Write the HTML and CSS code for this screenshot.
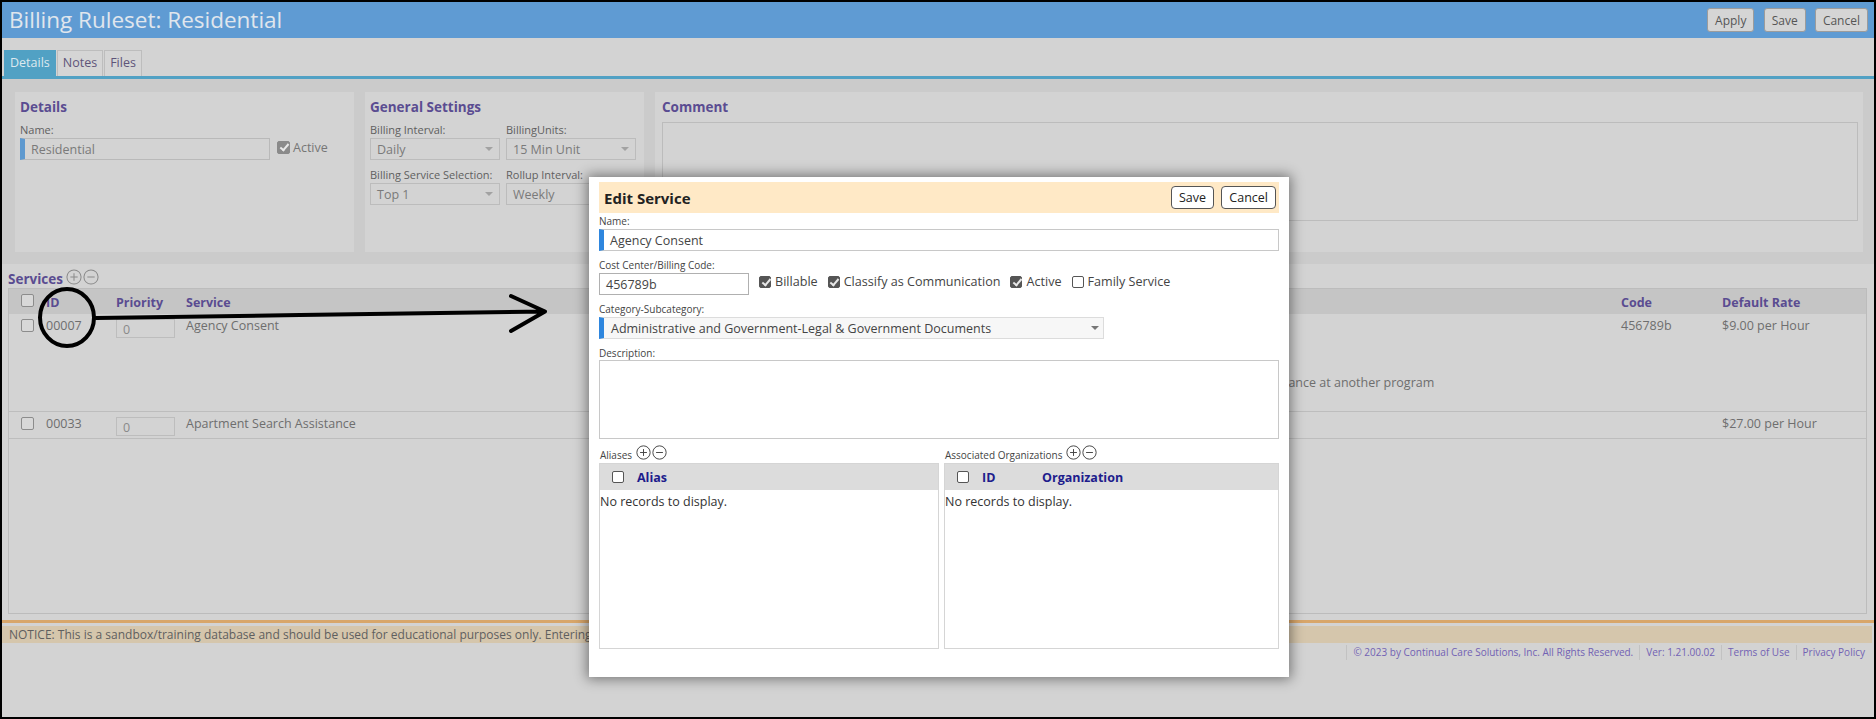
FILE: index.html
```html
<!DOCTYPE html>
<html lang="en">
<head>
    <meta charset="UTF-8">
    <meta name="viewport" content="width=device-width, initial-scale=1.0">
    <title>Billing Ruleset: Residential</title>
    <link rel="stylesheet" href="styles.css">
</head>
<body>
<div class="screen">
    <header class="topbar">
        <h1>Billing Ruleset: Residential</h1>
        <div class="actions">
            <button class="btn">Apply</button>
            <button class="btn">Save</button>
            <button class="btn">Cancel</button>
        </div>
    </header>

    <nav class="tabs">
        <a class="tab active">Details</a>
        <a class="tab">Notes</a>
        <a class="tab">Files</a>
    </nav>

    <div class="settings">
        <section class="panel panel-details">
            <h2>Details</h2>
            <label class="label">Name:</label>
            <div class="details-row">
                <div class="input required name-input">Residential</div>
                <label class="check"><span class="box checked"></span>Active</label>
            </div>
        </section>

        <section class="panel panel-general">
            <h2>General Settings</h2>
            <div class="fields">
                <div class="field">
                    <label class="label">Billing Interval:</label>
                    <div class="select">Daily</div>
                </div>
                <div class="field">
                    <label class="label">BillingUnits:</label>
                    <div class="select">15 Min Unit</div>
                </div>
                <div class="field">
                    <label class="label">Billing Service Selection:</label>
                    <div class="select">Top 1</div>
                </div>
                <div class="field">
                    <label class="label">Rollup Interval:</label>
                    <div class="select">Weekly</div>
                </div>
            </div>
        </section>

        <section class="panel panel-comment">
            <h2>Comment</h2>
            <div class="textarea"></div>
        </section>
    </div>

    <section class="services">
        <h2 class="services-title">Services
            <span class="icons">
                <svg class="ico" viewBox="0 0 14 14"><circle cx="7" cy="7" r="6.2"/><path d="M7 3.8v6.4M3.8 7h6.4"/></svg>
                <svg class="ico" viewBox="0 0 14 14"><circle cx="7" cy="7" r="6.2"/><path d="M3.8 7h6.4"/></svg>
            </span>
        </h2>
        <div class="grid-wrap">
            <table class="grid">
                <colgroup>
                    <col style="width:31px"><col style="width:70px"><col style="width:70px"><col style="width:1066px"><col><col style="width:101px"><col style="width:150px">
                </colgroup>
                <thead>
                    <tr>
                        <th><span class="box"></span></th>
                        <th>ID</th>
                        <th>Priority</th>
                        <th>Service</th>
                        <th></th>
                        <th>Code</th>
                        <th>Default Rate</th>
                    </tr>
                </thead>
                <tbody>
                    <tr class="tall">
                        <td><span class="box"></span></td>
                        <td>00007</td>
                        <td><div class="priority">0</div></td>
                        <td>Agency Consent</td>
                        <td class="desc">assistance at another program</td>
                        <td>456789b</td>
                        <td>$9.00 per Hour</td>
                    </tr>
                    <tr>
                        <td><span class="box"></span></td>
                        <td>00033</td>
                        <td><div class="priority">0</div></td>
                        <td>Apartment Search Assistance</td>
                        <td></td>
                        <td></td>
                        <td>$27.00 per Hour</td>
                    </tr>
                </tbody>
            </table>
        </div>
    </section>

    <div class="notice-line"></div>
    <div class="notice">NOTICE: This is a sandbox/training database and should be used for educational purposes only. Entering real client information is not permitted.</div>
    <footer class="footer">
        <a>© 2023 by Continual Care Solutions, Inc. All Rights Reserved.</a>
        <a>Ver: 1.21.00.02</a>
        <a>Terms of Use</a>
        <a>Privacy Policy</a>
    </footer>

    <svg class="annotation" width="1876" height="719" viewBox="0 0 1876 719">
        <ellipse cx="67" cy="317.5" rx="27" ry="28.5"/>
        <path d="M96 318 L300 315 L545 311.5 M511 296 L545 311.5 L511 331"/>
    </svg>

    <div class="modal">
        <div class="modal-head">
            <h3>Edit Service</h3>
            <div>
                <button class="mbtn">Save</button>
                <button class="mbtn">Cancel</button>
            </div>
        </div>

        <label class="mlabel">Name:</label>
        <div class="minput required">Agency Consent</div>

        <label class="mlabel">Cost Center/Billing Code:</label>
        <div class="code-row">
            <div class="minput code-input">456789b</div>
            <label class="mcheck"><span class="mbox checked"></span>Billable</label>
            <label class="mcheck"><span class="mbox checked"></span>Classify as Communication</label>
            <label class="mcheck"><span class="mbox checked"></span>Active</label>
            <label class="mcheck"><span class="mbox"></span>Family Service</label>
        </div>

        <label class="mlabel">Category-Subcategory:</label>
        <div class="mselect">Administrative and Government-Legal &amp; Government Documents</div>

        <label class="mlabel">Description:</label>
        <div class="mtextarea"></div>

        <div class="subgrids">
            <div class="subgrid">
                <div class="sub-title">Aliases
                    <svg class="mico" viewBox="0 0 14 14"><circle cx="7" cy="7" r="6.2"/><path d="M7 3.8v6.4M3.8 7h6.4"/></svg>
                    <svg class="mico" viewBox="0 0 14 14"><circle cx="7" cy="7" r="6.2"/><path d="M3.8 7h6.4"/></svg>
                </div>
                <div class="sub-box">
                    <div class="sub-head">
                        <span class="mbox"></span>
                        <span class="col-alias">Alias</span>
                    </div>
                    <div class="empty">No records to display.</div>
                </div>
            </div>
            <div class="subgrid">
                <div class="sub-title">Associated Organizations
                    <svg class="mico" viewBox="0 0 14 14"><circle cx="7" cy="7" r="6.2"/><path d="M7 3.8v6.4M3.8 7h6.4"/></svg>
                    <svg class="mico" viewBox="0 0 14 14"><circle cx="7" cy="7" r="6.2"/><path d="M3.8 7h6.4"/></svg>
                </div>
                <div class="sub-box">
                    <div class="sub-head">
                        <span class="mbox"></span>
                        <span class="col-id">ID</span>
                        <span>Organization</span>
                    </div>
                    <div class="empty">No records to display.</div>
                </div>
            </div>
        </div>
    </div>
</div>
</body>
</html>
```

FILE: styles.css
```css
* {
    box-sizing: border-box;
    margin: 0;
    padding: 0;
}

body {
    background: #000;
    font-family: 'Open Sans', sans-serif;
    font-size: 12.5px;
    color: #6e6e6e;
}

.screen {
    position: relative;
    width: 1876px;
    height: 719px;
    border: 2px solid #000;
    background: #d3d3d3;
    overflow: hidden;
}

/* top bar */
.topbar {
    display: flex;
    justify-content: space-between;
    align-items: center;
    height: 36px;
    padding: 0 6px 0 7px;
    background: #5f9bd3;
}

.topbar h1 {
    font-size: 22.5px;
    font-weight: 400;
    line-height: 36px;
    color: #e0e6ed;
}

.btn {
    height: 24px;
    margin-left: 6px;
    padding: 0 7px;
    border: 1px solid #9c9c9c;
    border-radius: 3px;
    background: #d5d5d5;
    color: #555;
    font-family: 'Open Sans', sans-serif;
    font-size: 12px;
}

/* tabs */
.tabs {
    display: flex;
    align-items: flex-end;
    height: 41px;
    padding: 12px 0 0 2px;
    border-bottom: 3px solid #51a1c4;
}

.tab {
    height: 26px;
    margin-right: 1px;
    padding: 0 5px;
    border: 1px solid #bdbdbd;
    border-bottom: none;
    background: #d5d5d5;
    color: #5e5479;
    line-height: 24px;
}

.tab.active {
    border-color: #51a1c4;
    background: #51a1c4;
    color: #dde9ef;
}

/* settings panels */
.settings {
    display: flex;
    gap: 11px;
    padding: 13px 11px 12px 13px;
    background: #cbcbcb;
}

.panel {
    height: 160px;
    padding: 6px 5px 5px;
    background: #d3d3d3;
}

.panel-details {
    width: 339px;
}

.panel-general {
    width: 279px;
}

.panel-comment {
    flex: 1;
    padding-left: 7px;
}

h2 {
    font-size: 13.5px;
    font-weight: 700;
    line-height: 18px;
    color: #5a4c91;
}

.label {
    display: block;
    margin-top: 7px;
    font-size: 11px;
    line-height: 13px;
    color: #606060;
}

.details-row {
    display: flex;
    align-items: center;
}

.input {
    display: flex;
    align-items: center;
    height: 22px;
    margin-top: 2px;
    padding-left: 6px;
    border: 1px solid #b9b9b9;
    color: #7a7a7a;
}

.input.required {
    border-left: 5px solid #5e99cf;
}

.name-input {
    width: 250px;
}

.check {
    display: flex;
    align-items: center;
    gap: 3px;
    margin-left: 7px;
    margin-top: -2px;
    color: #767676;
}

.box {
    display: inline-block;
    width: 13px;
    height: 13px;
    border: 1px solid #8c8c8c;
    border-radius: 2px;
    background: #d8d8d8;
    vertical-align: top;
}

.box.checked {
    position: relative;
    border-color: #8a8a8a;
    background: #8a8a8a;
}

.box.checked::after,
.mbox.checked::after {
    content: '';
    position: absolute;
    left: 3.5px;
    top: 0.5px;
    width: 3px;
    height: 7px;
    border: solid #e8e8e8;
    border-width: 0 2px 2px 0;
    transform: rotate(40deg);
}

.fields {
    display: grid;
    grid-template-columns: 130px 130px;
    column-gap: 6px;
}

.fields .field:nth-child(n+3) .label {
    margin-top: 8px;
}

.select {
    position: relative;
    display: flex;
    align-items: center;
    height: 22px;
    margin-top: 2px;
    padding-left: 6px;
    border: 1px solid #bcbcbc;
    color: #7a7a7a;
}

.select::after {
    content: '';
    position: absolute;
    right: 6px;
    top: 8px;
    border: 4px solid transparent;
    border-top: 4px solid #a2a2a2;
}

.textarea {
    height: 99px;
    margin-top: 6px;
    border: 1px solid #bcbcbc;
}

/* services grid */
.services {
    padding: 0 7px 0 6px;
}

.services-title {
    display: flex;
    align-items: center;
    gap: 3px;
    margin-top: 5px;
    margin-bottom: -1px;
    line-height: 20px;
}

.icons {
    display: flex;
    gap: 1px;
    margin-top: -5px;
}

.ico {
    width: 16px;
    height: 16px;
    fill: none;
    stroke: #8a8a8a;
    stroke-width: 0.9;
}

.grid-wrap {
    height: 326px;
    border: 1px solid #bcbcbc;
}

.grid {
    width: 100%;
    border-collapse: collapse;
    table-layout: fixed;
}

.grid th {
    height: 25px;
    padding: 2px 6px 0;
    background: #c5c5c5;
    color: #5a4c91;
    font-weight: 700;
    text-align: left;
    white-space: nowrap;
}

.grid th:first-child,
.grid td:first-child {
    padding-left: 12px;
}

.grid td {
    padding: 3px 6px 2px;
    border-bottom: 1px solid #bdbdbd;
    line-height: 17px;
    vertical-align: top;
    white-space: nowrap;
}

.grid tr.tall {
    height: 97px;
}

.grid td .box {
    margin-top: 2px;
}

.grid td.desc {
    padding-left: 10px;
    padding-bottom: 20px;
    vertical-align: bottom;
}

.priority {
    width: 59px;
    height: 19px;
    margin-top: 2px;
    padding-left: 6px;
    border: 1px solid #bdbdbd;
    line-height: 19px;
    color: #8a8a8a;
}

/* notice & footer */
.notice-line {
    height: 3px;
    margin-top: 6px;
    background: #d8a66a;
}

.notice {
    height: 17px;
    margin: 3px 2px 0 0;
    padding-left: 7px;
    background: #d5c6ac;
    font-size: 12px;
    line-height: 17px;
    color: #5f5f5f;
    white-space: nowrap;
    overflow: hidden;
}

.footer {
    display: flex;
    justify-content: flex-end;
    margin-top: 2px;
    padding-right: 9px;
    font-size: 10px;
    line-height: 15px;
}

.footer a {
    padding: 0 6px;
    border-left: 1px solid #c2c2c2;
    color: #7262b4;
}

.footer a:last-child {
    padding-right: 0;
}

/* hand drawn marker */
.annotation {
    position: absolute;
    left: -2px;
    top: -2px;
    fill: none;
    stroke: #000;
    stroke-width: 4;
    stroke-linecap: round;
    stroke-linejoin: round;
}

/* edit service dialog */
.modal {
    position: absolute;
    left: 587px;
    top: 175px;
    width: 700px;
    height: 500px;
    padding: 5px 10px 0;
    background: #fff;
    box-shadow: 0 0 12px 2px rgba(0, 0, 0, 0.45);
    color: #444;
}

.modal-head {
    display: flex;
    justify-content: space-between;
    align-items: center;
    height: 31px;
    padding: 0 3px 0 5px;
    background: #ffe9c6;
}

.modal-head h3 {
    font-size: 15px;
    font-weight: 700;
    color: #222;
}

.mbtn {
    height: 23px;
    margin-left: 4px;
    padding: 0 7px;
    border: 1px solid #555;
    border-radius: 4px;
    background: #fff;
    color: #222;
    font-family: 'Open Sans', sans-serif;
    font-size: 12.5px;
}

.mlabel {
    display: block;
    margin-top: 8px;
    font-size: 10px;
    line-height: 13px;
    color: #444;
}

.modal-head + .mlabel {
    margin-top: 2px;
}

.minput {
    display: flex;
    align-items: center;
    height: 22px;
    margin-top: 1px;
    padding-left: 6px;
    border: 1px solid #c8c8c8;
    color: #444;
}

.minput.required {
    border-left: 5px solid #2e86de;
}

.code-row {
    display: flex;
    align-items: center;
}

.code-input {
    width: 150px;
    border-color: #b0b0b0;
}

.mcheck {
    display: flex;
    align-items: center;
    gap: 4px;
    margin-left: 10px;
    margin-top: -4px;
    font-size: 12.6px;
    color: #444;
}

.mbox {
    position: relative;
    display: inline-block;
    width: 12px;
    height: 12px;
    border: 1px solid #555;
    border-radius: 2px;
    background: #fff;
}

.mbox.checked {
    background: #555;
}

.mselect {
    position: relative;
    display: flex;
    align-items: center;
    width: 505px;
    height: 22px;
    margin-top: 1px;
    padding-left: 7px;
    border: 1px solid #dcdcdc;
    border-left: 5px solid #2e86de;
    background: #f7f7f7;
    color: #444;
}

.mselect::after {
    content: '';
    position: absolute;
    right: 4px;
    top: 8px;
    border: 4px solid transparent;
    border-top: 4px solid #777;
}

.mtextarea {
    height: 79px;
    border: 1px solid #c8c8c8;
}

.subgrids {
    display: grid;
    grid-template-columns: 340px 1fr;
    column-gap: 5px;
    margin-top: 7px;
}

.sub-title {
    display: flex;
    align-items: center;
    gap: 1px;
    height: 17px;
    padding-left: 1px;
    font-size: 10px;
    color: #444;
}

.sub-title .mico:first-of-type {
    margin-left: 3px;
}

.mico {
    width: 15px;
    height: 15px;
    margin-top: -5px;
    fill: none;
    stroke: #444;
    stroke-width: 0.9;
}

.sub-box {
    height: 186px;
    border: 1px solid #d5d5d5;
}

.sub-head {
    display: flex;
    align-items: center;
    height: 26px;
    padding-left: 12px;
    background: #dcdcdc;
    color: #201c8c;
    font-weight: 700;
}

.sub-head .mbox {
    margin-right: 13px;
}

.col-id {
    width: 60px;
}

.empty {
    padding-top: 3px;
    line-height: 17px;
    color: #333;
}
```
